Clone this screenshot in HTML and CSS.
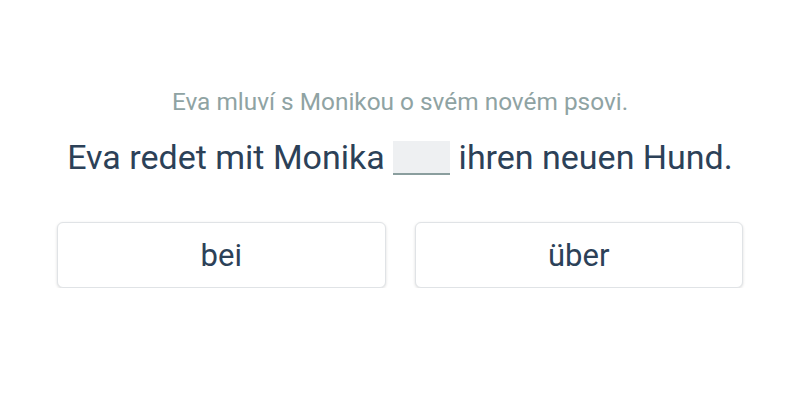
FILE: index.html
```html
<!DOCTYPE html>
<html lang="de">
<head>
<meta charset="utf-8">
<link rel="stylesheet" href="styles.css">
</head>
<body>
<main class="exercise">
  <p class="hint">Eva mluví s Monikou o svém novém psovi.</p>
  <p class="sentence">Eva redet mit Monika <span class="blank"></span> ihren neuen Hund.</p>
  <div class="options">
    <button class="option">bei</button>
    <button class="option">über</button>
  </div>
</main>
</body>
</html>
```
FILE: styles.css
```css
html, body {
  margin: 0;
  padding: 0;
  background: #ffffff;
  font-family: Roboto, "Liberation Sans", sans-serif;
}
.exercise {
  width: 686px;
  margin: 0 auto;
  padding-top: 86px;
  display: flex;
  flex-direction: column;
  align-items: center;
}
.hint {
  margin: 0;
  font-size: 24.4px;
  line-height: 32px;
  color: #8fa3a3;
}
.sentence {
  margin: 17px 0 0;
  font-size: 34px;
  line-height: 44px;
  color: #2c4158;
  white-space: nowrap;
}
.blank {
  display: inline-block;
  width: 57px;
  height: 32px;
  vertical-align: -6px;
  background: #eef0f2;
  border-bottom: 2px solid #8a9e9e;
}
.options {
  margin-top: 43px;
  width: 100%;
  display: grid;
  grid-template-columns: 1fr 1fr;
  gap: 29px;
}
.option {
  height: 66px;
  background: #ffffff;
  border: 1px solid #e0e3e6;
  border-radius: 6px;
  box-shadow: 0 1px 3px rgba(0, 0, 0, 0.14);
  font-family: Roboto, "Liberation Sans", sans-serif;
  font-size: 31px;
  color: #2c4158;
  padding: 0;
}
```
